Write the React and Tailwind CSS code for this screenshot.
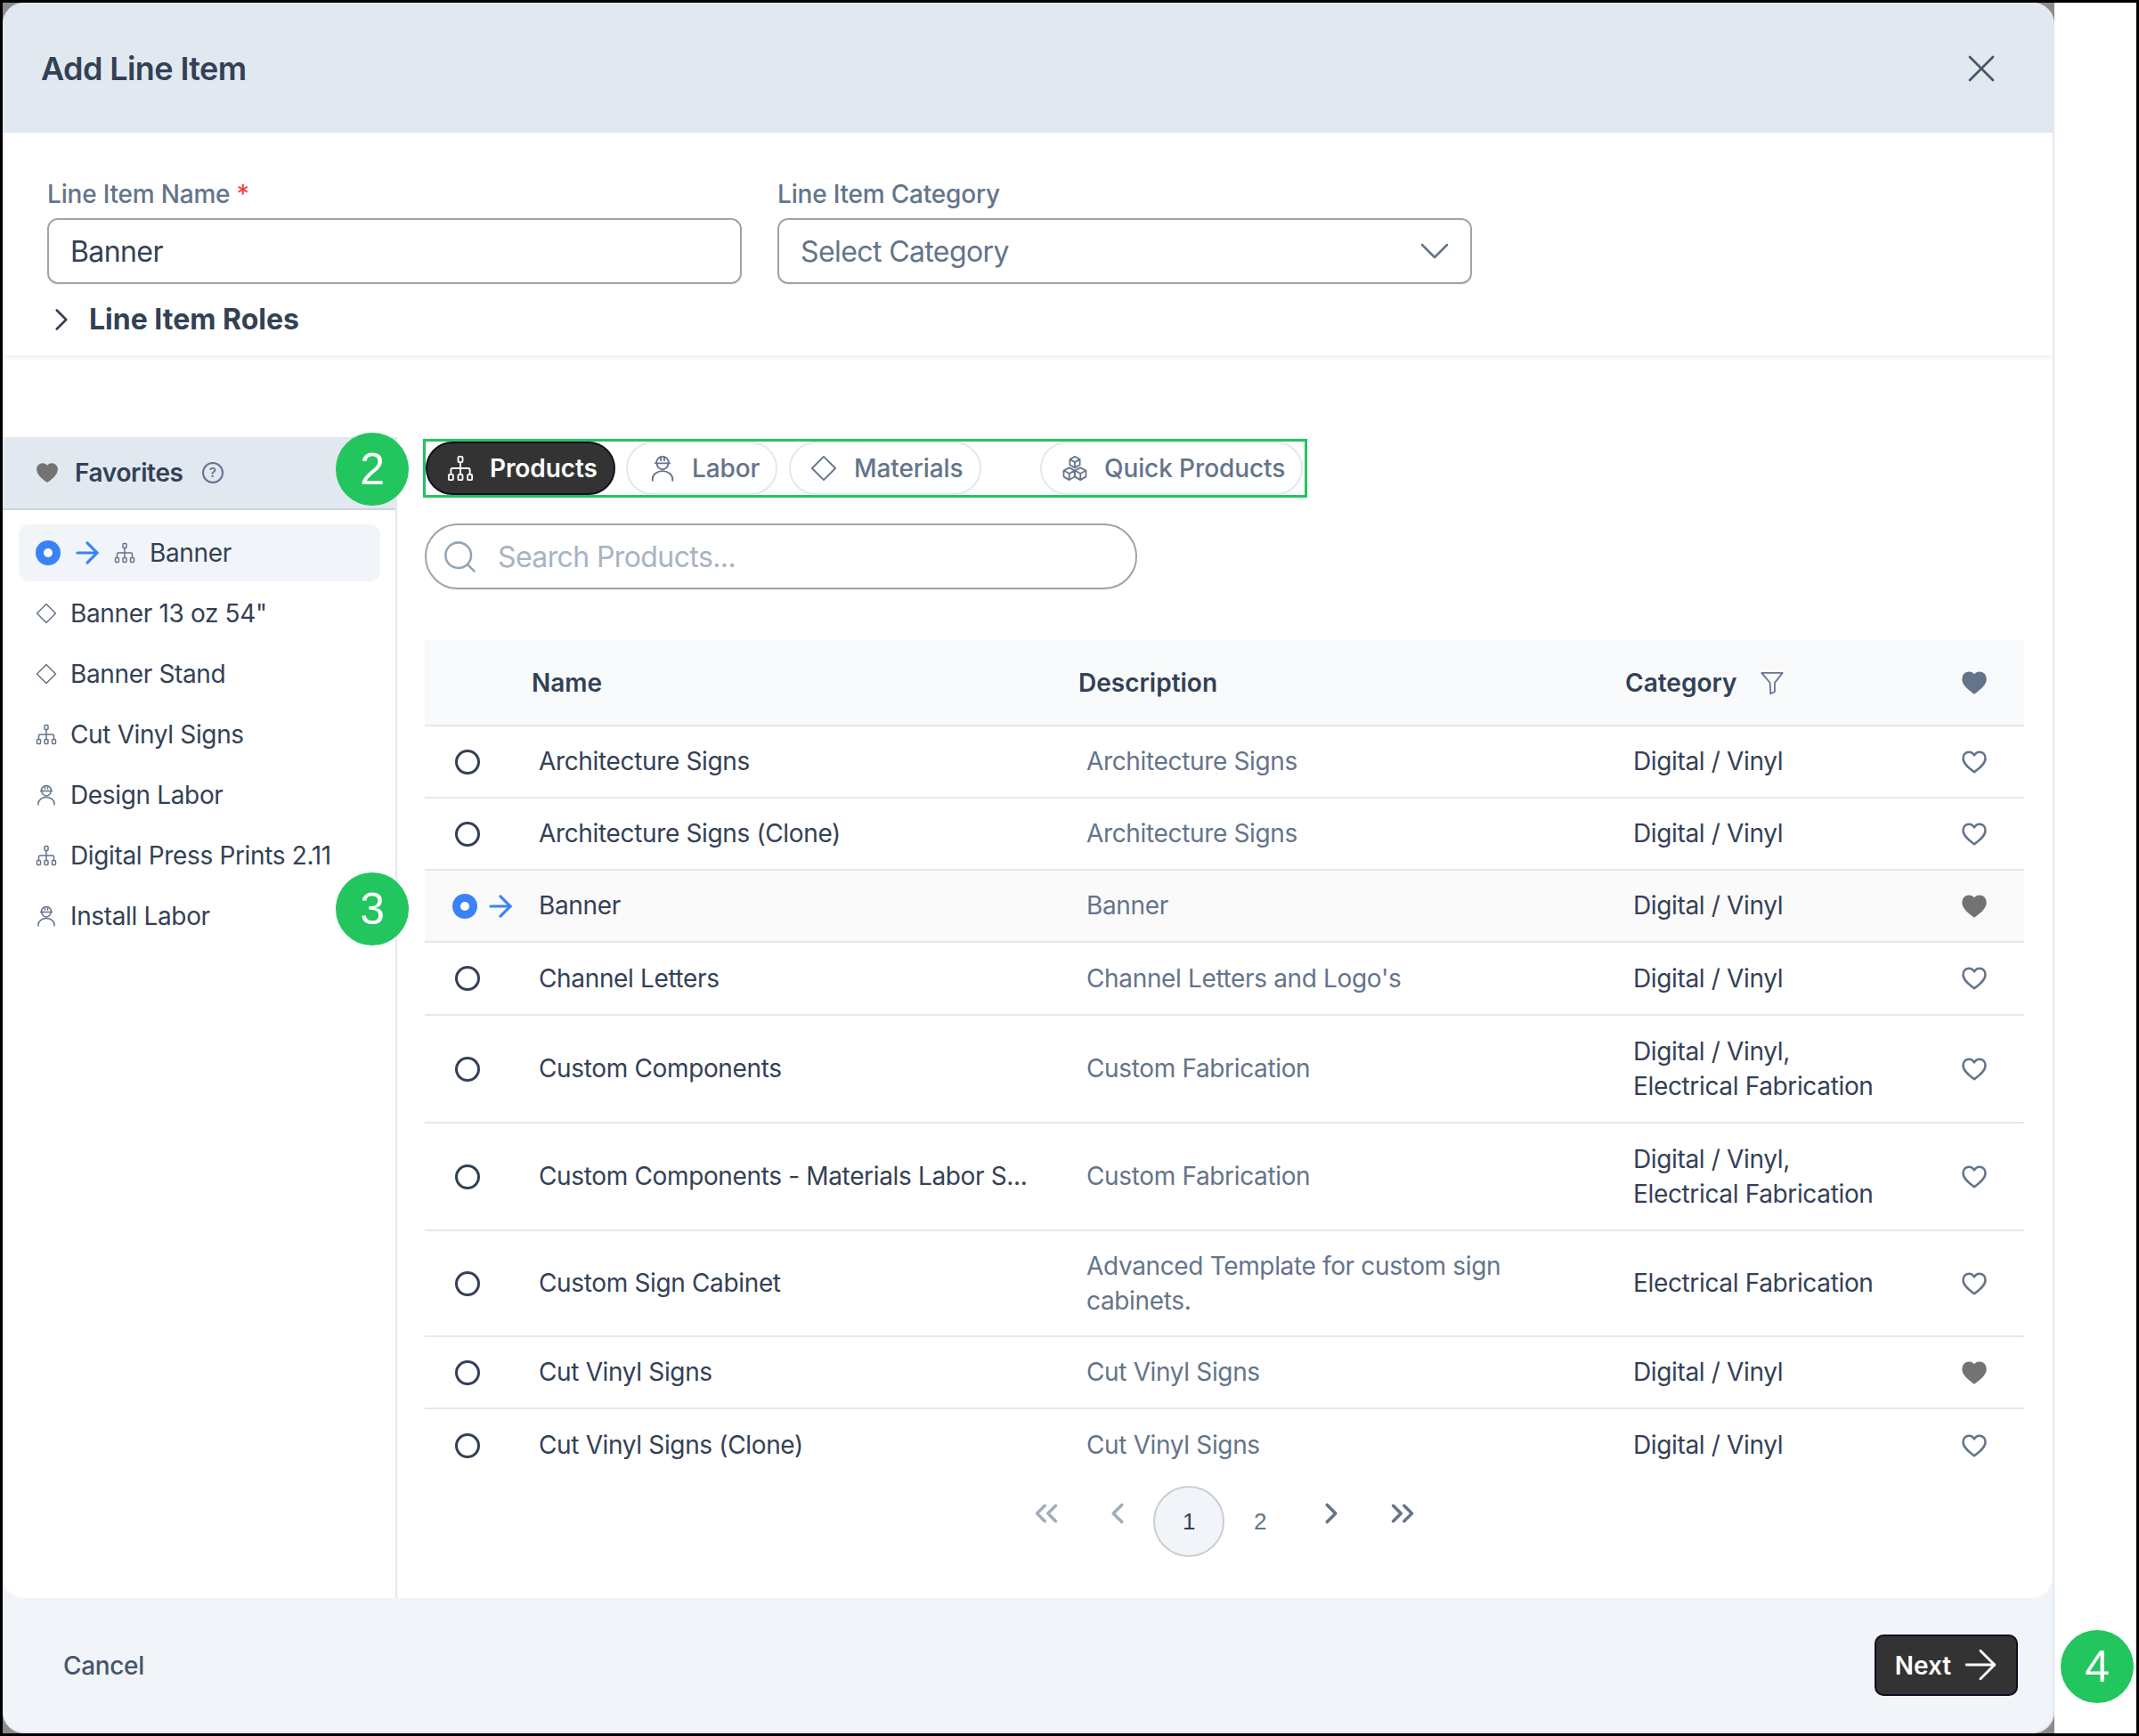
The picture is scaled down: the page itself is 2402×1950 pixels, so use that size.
import { ChevronDown, ChevronRight, ChevronLeft, ChevronsLeft, ChevronsRight, X, Search, ArrowRight } from "lucide-react";

function SitemapIcon({ className }) {
  return (
    <svg viewBox="0 0 24 24" fill="none" stroke="currentColor" strokeWidth={1.5} strokeLinecap="round" strokeLinejoin="round" className={className}>
      <rect x="10" y="1.5" width="4" height="5" rx="1" />
      <path d="M12 6.5V17.5M3.5 17.5V13.5a1.5 1.5 0 0 1 1.5-1.5h14a1.5 1.5 0 0 1 1.5 1.5v4" />
      <rect x="1.5" y="17.5" width="4" height="5" rx="1" />
      <rect x="10" y="17.5" width="4" height="5" rx="1" />
      <rect x="18.5" y="17.5" width="4" height="5" rx="1" />
    </svg>
  );
}

function LaborIcon({ className }) {
  return (
    <svg viewBox="0 0 24 24" fill="none" stroke="currentColor" strokeWidth={1.5} strokeLinecap="round" strokeLinejoin="round" className={className}>
      <path d="M6.500 7a5.500 5.500 0 0 1 11 0M5.500 7.500h13M10.500 1.800V5M13.500 1.800V5" />
      <path d="M7 8a5 5 0 0 0 10 0" />
      <path d="M3 23v-1.500a9 7 0 0 1 18 0V23" />
    </svg>
  );
}

function DiamondIcon({ className }) {
  return (
    <svg viewBox="0 0 24 24" fill="none" stroke="currentColor" strokeWidth={1.5} strokeLinejoin="round" className={className}>
      <path d="M12 1.500 22.500 12 12 22.500 1.500 12Z" />
    </svg>
  );
}

function CubesIcon({ className }) {
  return (
    <svg viewBox="0 0 24 24" fill="none" stroke="currentColor" strokeWidth={1.4} strokeLinejoin="round" className={className}>
      <path d="M12 1.500 16.500 4v5L12 11.500 7.500 9V4ZM7.500 4 12 6.500 16.500 4M12 6.500v5" />
      <path d="M7 11.500 11.800 14v5.500L7 22.500 2 19.500V14ZM2 14l5 2.800L11.800 14M7 16.800v5.700" />
      <path d="M17 11.500 22 14v5.500l-5 3-5-3V14ZM12 14l5 2.800L22 14M17 16.800v5.700" />
    </svg>
  );
}

function HeartIcon({ filled, className }) {
  return (
    <svg viewBox="0 0 24 24" fill={filled ? "currentColor" : "none"} stroke="currentColor" strokeWidth={2} strokeLinejoin="round" className={className}>
      <path d="M12 21C6 16.500 2 13 2 8.500 2 5.400 4.300 3 7.200 3c2 0 3.700 1 4.800 3 1.100-2 2.800-3 4.800-3C19.700 3 22 5.400 22 8.500 22 13 18 16.500 12 21Z" />
    </svg>
  );
}

function FunnelIcon({ className }) {
  return (
    <svg viewBox="0 0 24 24" fill="none" stroke="currentColor" strokeWidth={1.5} strokeLinejoin="round" className={className}>
      <path d="M2 2.500h20L14.500 12v8.500L10.500 22.500 10 12Z" />
    </svg>
  );
}

function Badge({ n, className }) {
  return (
    <div className={`absolute w-[82px] h-[82px] rounded-full bg-[#22c55e] text-white flex items-center justify-center text-[50px] font-['Liberation_Sans',sans-serif] ${className}`}>
      {n}
    </div>
  );
}

function SelectedRadio() {
  return (
    <span className="w-[28px] h-[28px] rounded-full bg-[#3b82f6] flex items-center justify-center shrink-0">
      <span className="w-[10px] h-[10px] rounded-full bg-white" />
    </span>
  );
}

const favorites = [
  { name: 'Banner 13 oz 54"', Icon: DiamondIcon },
  { name: "Banner Stand", Icon: DiamondIcon },
  { name: "Cut Vinyl Signs", Icon: SitemapIcon },
  { name: "Design Labor", Icon: LaborIcon },
  { name: "Digital Press Prints 2.11", Icon: SitemapIcon },
  { name: "Install Labor", Icon: LaborIcon },
];

const rows = [
  { name: "Architecture Signs", desc: "Architecture Signs", cat: ["Digital / Vinyl"], h: "h-[81px]" },
  { name: "Architecture Signs (Clone)", desc: "Architecture Signs", cat: ["Digital / Vinyl"], h: "h-[81px]" },
  { name: "Banner", desc: "Banner", cat: ["Digital / Vinyl"], h: "h-[81px]", selected: true, fav: true },
  { name: "Channel Letters", desc: "Channel Letters and Logo's", cat: ["Digital / Vinyl"], h: "h-[82px]" },
  { name: "Custom Components", desc: "Custom Fabrication", cat: ["Digital / Vinyl,", "Electrical Fabrication"], h: "h-[121px]" },
  { name: "Custom Components - Materials Labor S...", desc: "Custom Fabrication", cat: ["Digital / Vinyl,", "Electrical Fabrication"], h: "h-[121px]" },
  { name: "Custom Sign Cabinet", desc: "Advanced Template for custom sign cabinets.", cat: ["Electrical Fabrication"], h: "h-[119px]" },
  { name: "Cut Vinyl Signs", desc: "Cut Vinyl Signs", cat: ["Digital / Vinyl"], h: "h-[81px]", fav: true },
  { name: "Cut Vinyl Signs (Clone)", desc: "Cut Vinyl Signs", cat: ["Digital / Vinyl"], h: "h-[81px]", last: true },
];

export default function App() {
  return (
    <div className="relative w-[2402px] h-[1950px] border-[3px] border-black bg-white flex font-['Inter',sans-serif] text-[28px] text-[#334155] tracking-[-0.35px]">
      <div className="w-[2304px] h-full bg-[#8c8c8c] shrink-0">
        <div className="h-full rounded-[24px] bg-[#f1f5f9] border-r-2 border-b-2 border-[#e2e8f0] flex flex-col overflow-hidden">
          {/* Header */}
          <div className="h-[146px] shrink-0 bg-[#e2e8f0] flex items-center justify-between pl-[43px] pr-[54px] pt-[2px]">
            <h1 className="text-[36px] font-semibold tracking-[-0.6px]">Add Line Item</h1>
            <X className="w-[52px] h-[52px] text-[#475569]" strokeWidth={1.25} />
          </div>

          {/* Line item fields */}
          <div className="h-[250px] shrink-0 bg-white shadow-[0_2px_6px_rgba(15,23,42,0.08)] relative z-10 pl-[50px] pt-[49px]">
            <div className="flex gap-[40px]">
              <div className="w-[780px]">
                <label className="block h-[40px] leading-[40px] text-[#64748b] font-medium tracking-[-0.2px]">
                  Line Item Name <span className="text-[#ef4444]">*</span>
                </label>
                <div className="mt-[7px] h-[74px] rounded-[12px] border-2 border-[#a3a3a3] flex items-center pl-[24px] pt-[2px] shadow-[0_1px_2px_rgba(0,0,0,0.05)] text-[32px] tracking-[-0.6px]">
                  Banner
                </div>
              </div>
              <div className="w-[780px]">
                <label className="block h-[40px] leading-[40px] text-[#64748b] font-medium tracking-[-0.2px]">Line Item Category</label>
                <div className="mt-[7px] h-[74px] rounded-[12px] border-2 border-[#a3a3a3] flex items-center justify-between pl-[24px] pr-[12px] shadow-[0_1px_2px_rgba(0,0,0,0.05)] text-[32px] tracking-[-0.6px] text-[#64748b]">
                  <span className="pt-[2px]">Select Category</span>
                  <ChevronDown className="w-[56px] h-[56px]" strokeWidth={1.1} />
                </div>
              </div>
            </div>
            <div className="mt-[20px] -ml-[5px] flex items-center gap-[10px] h-[40px]">
              <ChevronRight className="w-[42px] h-[42px]" strokeWidth={1.5} />
              <span className="text-[32px] font-bold leading-[40px] tracking-normal">Line Item Roles</span>
            </div>
          </div>

          {/* Favorites + catalogue */}
          <div className="flex-1 min-h-0 bg-white rounded-b-[24px] flex pt-[92px]">
            <aside className="w-[443px] shrink-0 border-r-2 border-[#e2e8f0]">
              <div className="h-[82px] bg-[#e2e8f0] border-b-2 border-[#cbd5e1] flex items-center pl-[37px]">
                <HeartIcon filled className="w-[26px] h-[26px] text-[#737373]" />
                <span className="ml-[18px] font-semibold">Favorites</span>
                <span className="ml-[21px] w-[24px] h-[24px] rounded-full border-2 border-[#64748b] text-[#64748b] text-[15px] font-semibold flex items-center justify-center">?</span>
              </div>
              <div className="pl-[18px] pr-[17px] pt-[16px]">
                <div className="h-[64px] rounded-[12px] bg-[#f1f5f9] flex items-center pl-[19px]">
                  <SelectedRadio />
                  <ArrowRight className="ml-[11px] w-[38px] h-[38px] text-[#3b82f6] shrink-0" strokeWidth={2} />
                  <SitemapIcon className="ml-[11px] w-[24px] h-[24px] text-[#64748b]" />
                  <span className="ml-[16px]">Banner</span>
                </div>
                <div className="mt-[2px]">
                  {favorites.map(({ name, Icon }) => (
                    <div key={name} className="h-[68px] flex items-center pl-[19px]">
                      <Icon className="w-[24px] h-[24px] text-[#64748b] shrink-0" />
                      <span className="ml-[15px]">{name}</span>
                    </div>
                  ))}
                </div>
              </div>
            </aside>

            <main className="flex-1 min-w-0 pl-[31px] pr-[32px] relative">
              {/* Tabs */}
              <div className="flex h-[60px] mt-[5px] ml-[1px] text-[#64748b] font-medium tracking-[-0.1px]">
                <div className="w-[213px] rounded-full bg-[#333333] border-2 border-[#0f0f23] text-white font-semibold flex items-center pl-[22px]">
                  <SitemapIcon className="w-[30px] h-[30px]" />
                  <span className="ml-[18px]">Products</span>
                </div>
                <div className="ml-[12px] w-[170px] rounded-full border-2 border-[#e2e8f0] flex items-center pl-[24px]">
                  <LaborIcon className="w-[30px] h-[30px]" />
                  <span className="ml-[18px]">Labor</span>
                </div>
                <div className="ml-[13px] w-[216px] rounded-full border-2 border-[#e2e8f0] flex items-center pl-[22px]">
                  <DiamondIcon className="w-[30px] h-[30px]" />
                  <span className="ml-[19px]">Materials</span>
                </div>
                <div className="ml-[66px] w-[295px] rounded-full border-2 border-[#e2e8f0] flex items-center pl-[22px]">
                  <CubesIcon className="w-[30px] h-[30px]" />
                  <span className="ml-[18px]">Quick Products</span>
                </div>
              </div>

              {/* Search */}
              <div className="mt-[32px] w-[800px] h-[74px] rounded-full border-2 border-[#a3a3a3] flex items-center pl-[16px] shadow-[0_1px_2px_rgba(0,0,0,0.05)]">
                <Search className="w-[43px] h-[43px] text-[#94a3b8] shrink-0" strokeWidth={1.4} />
                <span className="ml-[21px] pt-[2px] text-[32px] tracking-[-0.6px] text-[#a8b3c4]">Search Products...</span>
              </div>

              {/* Table */}
              <div className="mt-[57px]">
                <div className="h-[97px] bg-[#f8fafc] border-b-2 border-[#e2e8f0] grid grid-cols-[120px_614px_614px_335px_1fr] items-center font-semibold tracking-normal">
                  <span />
                  <span>Name</span>
                  <span>Description</span>
                  <span className="flex items-center gap-[26px]">
                    Category
                    <FunnelIcon className="w-[28px] h-[28px] text-[#64748b]" />
                  </span>
                  <span className="flex justify-center">
                    <HeartIcon filled className="w-[30px] h-[30px] text-[#64748b]" />
                  </span>
                </div>
                {rows.map((r) => (
                  <div
                    key={r.name}
                    className={`${r.h} ${r.last ? "" : "border-b-2 border-[#e2e8f0]"} ${r.selected ? "bg-[#fafafa]" : ""} grid grid-cols-[128px_615px_614px_326px_1fr] items-center leading-[39px]`}
                  >
                    {r.selected ? (
                      <span className="flex items-center pl-[31px] gap-[7px]">
                        <SelectedRadio />
                        <ArrowRight className="w-[38px] h-[38px] text-[#3b82f6] shrink-0" strokeWidth={2} />
                      </span>
                    ) : (
                      <span className="pl-[34px]">
                        <span className="block w-[28px] h-[28px] rounded-full border-[3px] border-[#334155]" />
                      </span>
                    )}
                    <span className="whitespace-nowrap">{r.name}</span>
                    <span className="text-[#64748b] max-w-[520px]">{r.desc}</span>
                    <span>
                      {r.cat.map((c) => (
                        <span key={c} className="block">{c}</span>
                      ))}
                    </span>
                    <span className="flex justify-center">
                      <HeartIcon filled={r.fav} className={`w-[30px] h-[30px] ${r.fav ? "text-[#737373]" : "text-[#64748b]"}`} />
                    </span>
                  </div>
                ))}
              </div>

              {/* Pagination */}
              <div className="mt-[5px] flex justify-center items-start font-['Liberation_Sans',sans-serif] text-[26px]">
                <span className="w-[80px] h-[62px] flex items-center justify-center text-[#a1adbd]">
                  <ChevronsLeft className="w-[42px] h-[42px]" strokeWidth={2} />
                </span>
                <span className="w-[80px] h-[62px] flex items-center justify-center text-[#a1adbd]">
                  <ChevronLeft className="w-[38px] h-[38px]" strokeWidth={2.25} />
                </span>
                <span className="w-[80px] h-[80px] rounded-full bg-[#f1f5f9] border-2 border-[#cbcdd0] flex items-center justify-center">1</span>
                <span className="w-[80px] h-[80px] flex items-center justify-center text-[#64748b]">2</span>
                <span className="w-[80px] h-[62px] flex items-center justify-center text-[#64748b]">
                  <ChevronRight className="w-[38px] h-[38px]" strokeWidth={2.25} />
                </span>
                <span className="w-[80px] h-[62px] flex items-center justify-center text-[#64748b]">
                  <ChevronsRight className="w-[42px] h-[42px]" strokeWidth={2} />
                </span>
              </div>
            </main>
          </div>

          {/* Footer */}
          <div className="h-[150px] shrink-0 flex items-center justify-between pl-[68px] pr-[39px]">
            <span className="font-medium text-[#475569] pt-[2px]">Cancel</span>
            <div className="w-[161px] h-[69px] rounded-[10px] bg-[#333333] border-2 border-[#0f0f23] text-white font-semibold tracking-normal flex items-center justify-center gap-[6px]">
              <span className="pt-[1px]">Next</span>
              <ArrowRight className="w-[54px] h-[54px] -mr-[8px] shrink-0" strokeWidth={1.3} />
            </div>
          </div>
        </div>
      </div>

      {/* Annotations */}
      <div className="absolute left-[472px] top-[490px] w-[993px] h-[66px] border-[3px] border-[#22c55e]" />
      <Badge n="2" className="left-[374px] top-[483px]" />
      <Badge n="3" className="left-[374px] top-[977px]" />
      <Badge n="4" className="left-[2311px] top-[1828px]" />
    </div>
  );
}
